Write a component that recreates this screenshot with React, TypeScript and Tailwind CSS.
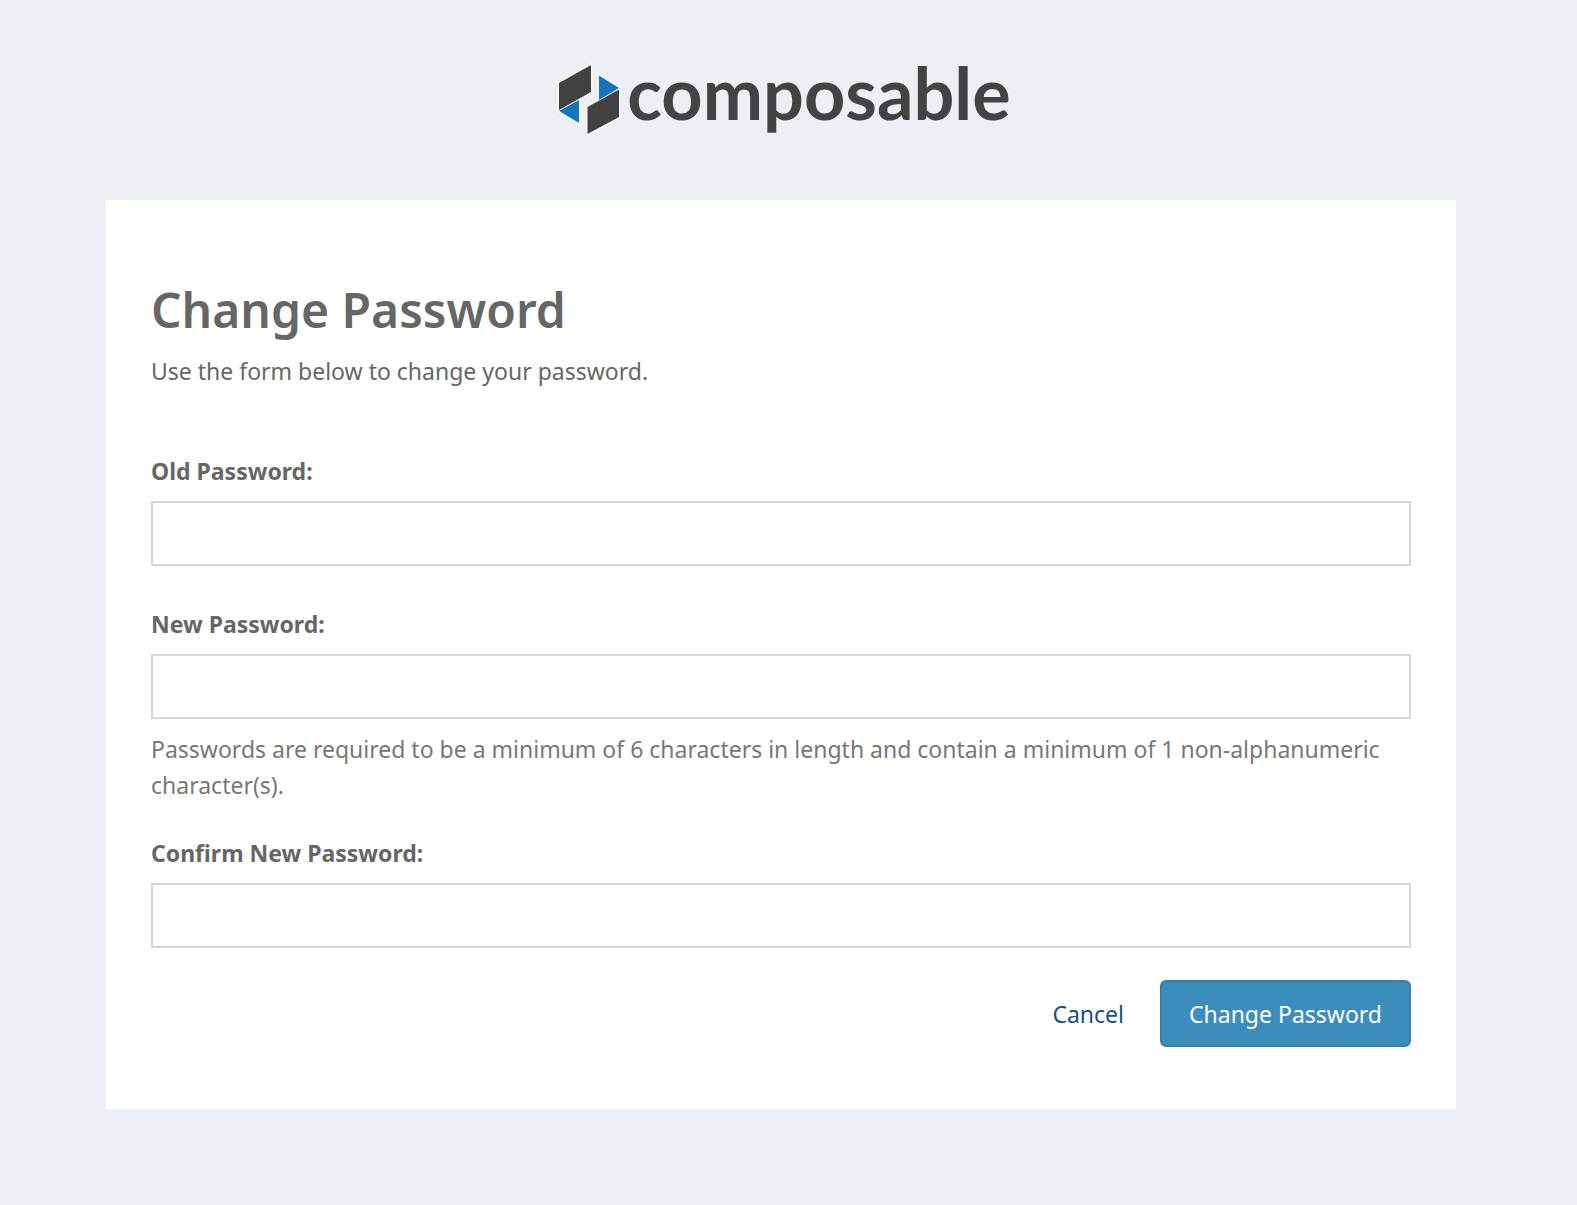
import React from "react";

function Logo() {
  return (
    <div className="flex items-start justify-center">
      <svg width="66" height="76" viewBox="0 0 66 76" aria-hidden="true">
        <g stroke="#fafbfc" strokeWidth="3" strokeLinejoin="miter" fill="#fafbfc">
          <path d="M2 21 34 3V30L2 48Z" />
          <path d="M42 13.500 62 26 42 38Z" />
          <path d="M2 49 22 38V61Z" />
          <path d="M30.500 45 62 27.500V55L30.500 72Z" />
        </g>
        <path d="M2 21 34 3V30L2 48Z" fill="#414141" />
        <path d="M42 13.500 62 26 42 38Z" fill="#1475bd" />
        <path d="M2 49 22 38V61Z" fill="#1475bd" />
        <path d="M30.500 45 62 27.500V55L30.500 72Z" fill="#414141" />
      </svg>
      <span className="ml-1 font-['Lato',sans-serif] text-[72px] leading-[60px] font-bold text-[#424344]">
        composable
      </span>
    </div>
  );
}

type FieldProps = {
  id: string;
  label: string;
  hint?: string;
};

function PasswordField({ id, label, hint }: FieldProps) {
  return (
    <div>
      <label htmlFor={id} className="block font-bold">
        {label}
      </label>
      <input
        id={id}
        type="password"
        aria-describedby={hint ? `${id}-hint` : undefined}
        className="mt-3 block h-[65px] w-full border-2 border-[#d2d6de] bg-white px-6 outline-none focus:border-[#3c8dbc]"
      />
      {hint && (
        <p id={`${id}-hint`} className="mt-3 text-[#777777]">
          {hint}
        </p>
      )}
    </div>
  );
}

export default function App() {
  return (
    <div className="min-h-screen bg-[#ecf0f5] pt-[62px] pb-24 font-['Noto_Sans',sans-serif] text-[23px] leading-9 text-[#666666]">
      <header className="pr-[9px]">
        <Logo />
      </header>
      <main className="mt-[62px] mr-[121px] ml-[106px] bg-white px-[45px] pt-20 pb-[62px]">
        <h1 className="text-[48px] leading-[60px] font-semibold">Change Password</h1>
        <p className="mt-[13px]">Use the form below to change your password.</p>
        <form className="mt-16" onSubmit={(event) => event.preventDefault()}>
          <div className="flex flex-col gap-10">
            <PasswordField id="old-password" label="Old Password:" />
            <PasswordField
              id="new-password"
              label="New Password:"
              hint="Passwords are required to be a minimum of 6 characters in length and contain a minimum of 1 non-alphanumeric character(s)."
            />
          </div>
          <div className="mt-8">
            <PasswordField id="confirm-password" label="Confirm New Password:" />
          </div>
          <div className="mt-8 flex items-center justify-end gap-9">
            <a href="#cancel" className="text-[#174f84]">
              Cancel
            </a>
            <button
              type="submit"
              className="h-[67px] rounded-md border-2 border-[#367fa9] bg-[#3c8dbc] px-[27px] text-white"
            >
              Change Password
            </button>
          </div>
        </form>
      </main>
    </div>
  );
}
